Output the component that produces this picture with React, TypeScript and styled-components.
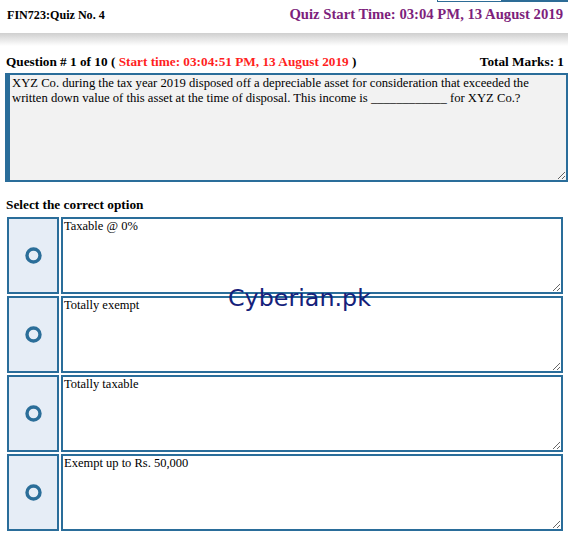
import React from "react";
import styled, { createGlobalStyle } from "styled-components";

const GlobalStyle = createGlobalStyle`
  html, body {
    margin: 0;
    padding: 0;
    background: #ffffff;
  }
  body {
    font-family: "Liberation Serif", "Times New Roman", serif;
    color: #000;
  }
`;

const Page = styled.div`
  position: relative;
  width: 568px;
`;

const TopStrip = styled.div`
  height: 2px;
  display: flex;
  justify-content: flex-end;
  overflow: hidden;
`;

const StripBox = styled.div<{ filled?: boolean }>`
  width: ${({ filled }) => (filled ? "66px" : "65px")};
  height: 2px;
  box-sizing: border-box;
  border: 1px solid #2d6c96;
  border-top: none;
  background: ${({ filled }) => (filled ? "#2d6c96" : "#ffffff")};
`;

const Header = styled.div`
  height: 31px;
  box-sizing: border-box;
  padding: 4px 5px 0 7px;
  display: flex;
  justify-content: space-between;
  align-items: baseline;
  line-height: 16px;
  font-weight: bold;
`;

const QuizTitle = styled.span`
  font-size: 12.1px;
`;

const QuizStart = styled.span`
  font-size: 14.7px;
  color: #7d1f7c;
`;

const ShadowBand = styled.div`
  height: 13px;
  background: linear-gradient(#cfcfcf, #ffffff);
`;

const QuestionBar = styled.div`
  margin-top: 8px;
  padding: 0 4px 0 6px;
  display: flex;
  justify-content: space-between;
  line-height: 16px;
  font-size: 13.25px;
  font-weight: bold;
`;

const RedText = styled.span`
  color: #ff1f1f;
`;

const QuestionBox = styled.textarea`
  display: block;
  margin: 3px 0 0 5px;
  width: 563px;
  height: 109px;
  box-sizing: border-box;
  border: 2px solid #2a6d9a;
  border-left-width: 5px;
  background: #f2f2f2;
  padding: 1px 2px;
  font-family: "Liberation Serif", "Times New Roman", serif;
  font-size: 12.65px;
  color: #000;
  outline: none;
`;

const SectionLabel = styled.div`
  margin-top: 15px;
  padding-left: 6px;
  line-height: 16px;
  font-size: 13.3px;
  font-weight: bold;
`;

const OptionList = styled.div`
  margin: 4px 0 0 7px;
  display: flex;
  flex-direction: column;
  gap: 2px;
`;

const OptionRow = styled.div`
  display: flex;
  gap: 2px;
  height: 77px;
`;

const RadioCell = styled.div`
  width: 52px;
  box-sizing: border-box;
  border: 2px solid #2a6d9a;
  background: #e6edf6;
  display: flex;
  align-items: center;
  justify-content: center;
`;

const OptionText = styled.textarea`
  width: 502px;
  height: 77px;
  box-sizing: border-box;
  border: 2px solid #2a6d9a;
  background: #ffffff;
  padding: 0 1px;
  font-family: "Liberation Serif", "Times New Roman", serif;
  font-size: 12.5px;
  color: #000;
  outline: none;
`;

const Watermark = styled.div`
  position: absolute;
  left: 228px;
  top: 287px;
  font-family: "DejaVu Sans", Verdana, sans-serif;
  font-size: 23.8px;
  line-height: 1;
  color: #15217a;
  pointer-events: none;
`;

const RadioIcon = () => (
  <svg width="17" height="17" viewBox="0 0 17 17">
    <circle cx="8.5" cy="8.5" r="6.5" fill="none" stroke="#2b6e99" strokeWidth="3.4" />
  </svg>
);

const question =
  "XYZ Co. during the tax year 2019 disposed off a depreciable asset for consideration that exceeded the written down value of this asset at the time of disposal. This income is ____________ for XYZ Co.?";

const options = ["Taxable @ 0%", "Totally exempt", "Totally taxable", "Exempt up to Rs. 50,000"];

export default function App() {
  return (
    <Page>
      <GlobalStyle />
      <TopStrip>
        <StripBox />
        <StripBox filled />
      </TopStrip>
      <Header>
        <QuizTitle>FIN723:Quiz No. 4</QuizTitle>
        <QuizStart>Quiz Start Time: 03:04 PM, 13 August 2019</QuizStart>
      </Header>
      <ShadowBand />
      <QuestionBar>
        <span>
          Question # 1 of 10 ( <RedText>Start time: 03:04:51 PM, 13 August 2019</RedText> )
        </span>
        <span>Total Marks: 1</span>
      </QuestionBar>
      <QuestionBox readOnly defaultValue={question} />
      <SectionLabel>Select the correct option</SectionLabel>
      <OptionList>
        {options.map((opt) => (
          <OptionRow key={opt}>
            <RadioCell>
              <RadioIcon />
            </RadioCell>
            <OptionText readOnly defaultValue={opt} />
          </OptionRow>
        ))}
      </OptionList>
      <Watermark>Cyberian.pk</Watermark>
    </Page>
  );
}
